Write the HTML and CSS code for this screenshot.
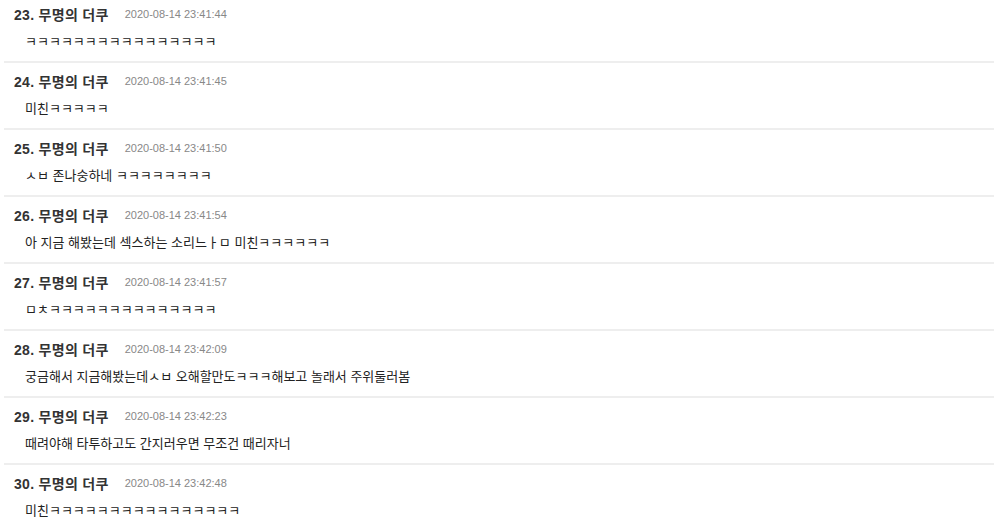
FILE: index.html
```html
<!DOCTYPE html>
<html lang="ko">
<head>
  <meta charset="UTF-8" />
  <meta name="viewport" content="width=device-width, initial-scale=1" />
  <title>댓글</title>
  <link rel="stylesheet" href="styles.css">
</head>
<body>
  <ul class="comments">
    <li class="comment">
      <div class="meta"><span class="nick">23. 무명의 더쿠</span><span class="date">2020-08-14 23:41:44</span></div>
      <p class="text">ㅋㅋㅋㅋㅋㅋㅋㅋㅋㅋㅋㅋㅋㅋㅋㅋ</p>
    </li>
    <li class="comment">
      <div class="meta"><span class="nick">24. 무명의 더쿠</span><span class="date">2020-08-14 23:41:45</span></div>
      <p class="text">미친ㅋㅋㅋㅋㅋ</p>
    </li>
    <li class="comment">
      <div class="meta"><span class="nick">25. 무명의 더쿠</span><span class="date">2020-08-14 23:41:50</span></div>
      <p class="text">ㅅㅂ 존나숭하네 ㅋㅋㅋㅋㅋㅋㅋㅋ</p>
    </li>
    <li class="comment">
      <div class="meta"><span class="nick">26. 무명의 더쿠</span><span class="date">2020-08-14 23:41:54</span></div>
      <p class="text">아 지금 해봤는데 섹스하는 소리느ㅏㅁ 미친ㅋㅋㅋㅋㅋㅋ</p>
    </li>
    <li class="comment">
      <div class="meta"><span class="nick">27. 무명의 더쿠</span><span class="date">2020-08-14 23:41:57</span></div>
      <p class="text">ㅁㅊㅋㅋㅋㅋㅋㅋㅋㅋㅋㅋㅋㅋㅋㅋ</p>
    </li>
    <li class="comment">
      <div class="meta"><span class="nick">28. 무명의 더쿠</span><span class="date">2020-08-14 23:42:09</span></div>
      <p class="text">궁금해서 지금해봤는데ㅅㅂ 오해할만도ㅋㅋㅋ해보고 놀래서 주위둘러봄</p>
    </li>
    <li class="comment">
      <div class="meta"><span class="nick">29. 무명의 더쿠</span><span class="date">2020-08-14 23:42:23</span></div>
      <p class="text">때려야해 타투하고도 간지러우면 무조건 때리자너</p>
    </li>
    <li class="comment">
      <div class="meta"><span class="nick">30. 무명의 더쿠</span><span class="date">2020-08-14 23:42:48</span></div>
      <p class="text">미친ㅋㅋㅋㅋㅋㅋㅋㅋㅋㅋㅋㅋㅋㅋㅋㅋ</p>
    </li>
  </ul>
</body>
</html>
```

FILE: styles.css
```css
body {
  margin: 0;
  padding: 0;
  background-color: #fff;
  color: #333;
  font-family: "Liberation Sans", "Noto Sans CJK KR", sans-serif;
}

.comments {
  list-style: none;
  margin: -4px 1px 0 4px;
  padding: 0;
}

.comment {
  padding: 9px 0 10px;
  border-bottom: 2px solid #eee;
}

.meta {
  display: flex;
  align-items: center;
  height: 18px;
  padding-left: 10px;
}

.nick {
  font-size: 14px;
  font-weight: bold;
  letter-spacing: 0.3px;
  color: #333;
  margin-right: 16px;
}

.date {
  font-size: 11px;
  color: #888;
}

.text {
  margin: 10px 0 0;
  padding-left: 21px;
  font-size: 13px;
  line-height: 18px;
  color: #222;
}
```
